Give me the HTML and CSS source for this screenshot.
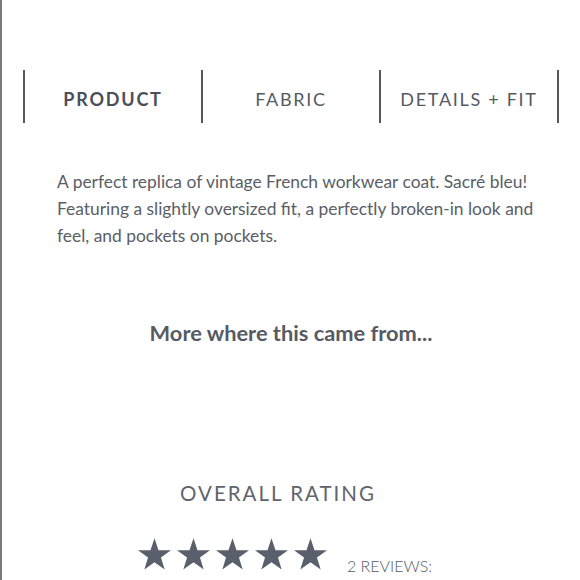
FILE: index.html
```html
<!DOCTYPE html>
<html>
<head>
<meta charset="utf-8">
<link rel="stylesheet" href="styles.css">
</head>
<body>
<div class="page">
  <nav class="tabs">
    <div class="tab active">PRODUCT</div>
    <div class="tab">FABRIC</div>
    <div class="tab last">DETAILS + FIT</div>
  </nav>
  <p class="desc">A perfect replica of vintage French workwear coat. Sacré bleu! Featuring a slightly oversized fit, a perfectly broken-in look and feel, and pockets on pockets.</p>
  <h2 class="more">More where this came from...</h2>
  <h3 class="rating-title">OVERALL RATING</h3>
  <div class="rating-row">
    <div class="stars">
      <svg class="star" viewBox="0 0 24 24"><polygon points="12,1.5 14.6,9.2 22.7,9.2 16.2,14 18.6,21.8 12,17 5.4,21.8 7.8,14 1.3,9.2 9.4,9.2"/></svg>
      <svg class="star" viewBox="0 0 24 24"><polygon points="12,1.5 14.6,9.2 22.7,9.2 16.2,14 18.6,21.8 12,17 5.4,21.8 7.8,14 1.3,9.2 9.4,9.2"/></svg>
      <svg class="star" viewBox="0 0 24 24"><polygon points="12,1.5 14.6,9.2 22.7,9.2 16.2,14 18.6,21.8 12,17 5.4,21.8 7.8,14 1.3,9.2 9.4,9.2"/></svg>
      <svg class="star" viewBox="0 0 24 24"><polygon points="12,1.5 14.6,9.2 22.7,9.2 16.2,14 18.6,21.8 12,17 5.4,21.8 7.8,14 1.3,9.2 9.4,9.2"/></svg>
      <svg class="star" viewBox="0 0 24 24"><polygon points="12,1.5 14.6,9.2 22.7,9.2 16.2,14 18.6,21.8 12,17 5.4,21.8 7.8,14 1.3,9.2 9.4,9.2"/></svg>
    </div>
    <span class="reviews">2 REVIEWS:</span>
  </div>
</div>
</body>
</html>
```
FILE: styles.css
```css
html, body {
  margin: 0;
  padding: 0;
  background: #fff;
}
body {
  font-family: Lato, "Open Sans", sans-serif;
  color: #555a63;
}
.page {
  border-left: 2px solid #7a7a7a;
  min-height: 580px;
  box-sizing: border-box;
  overflow: hidden;
}
.tabs {
  display: flex;
  margin: 70px 0 0 21px;
}
.tab {
  width: 178px;
  height: 53px;
  box-sizing: border-box;
  padding-top: 5px;
  border-left: 2px solid #55575c;
  display: flex;
  align-items: center;
  justify-content: center;
  font-size: 18px;
  letter-spacing: 1.7px;
  color: #555a63;
}
.tab.active {
  font-weight: 700;
  letter-spacing: 1.8px;
  color: #4a4f5a;
}
.tab.last {
  width: 180px;
  border-right: 2px solid #55575c;
}
.desc {
  margin: 45px 36px 0 55px;
  font-size: 17.4px;
  line-height: 27px;
  color: #5a5e66;
}
.more {
  margin: 71px 0 0;
  text-align: center;
  font-size: 21.8px;
  font-weight: 700;
  color: #555a63;
  line-height: 26px;
}
.rating-title {
  margin: 134px 26px 0 0;
  text-align: center;
  font-size: 20.5px;
  font-weight: 400;
  letter-spacing: 2px;
  line-height: 26px;
  color: #60646c;
}
.rating-row {
  display: flex;
  align-items: flex-end;
  margin: 30px 0 0 134px;
}
.stars {
  display: flex;
  gap: 2px;
}
.star {
  width: 37px;
  height: 37px;
  fill: #5a606b;
}
.reviews {
  margin-left: 18px;
  font-size: 16px;
  font-weight: 300;
  color: #555a63;
  line-height: 20px;
  margin-bottom: -3px;
}
```
